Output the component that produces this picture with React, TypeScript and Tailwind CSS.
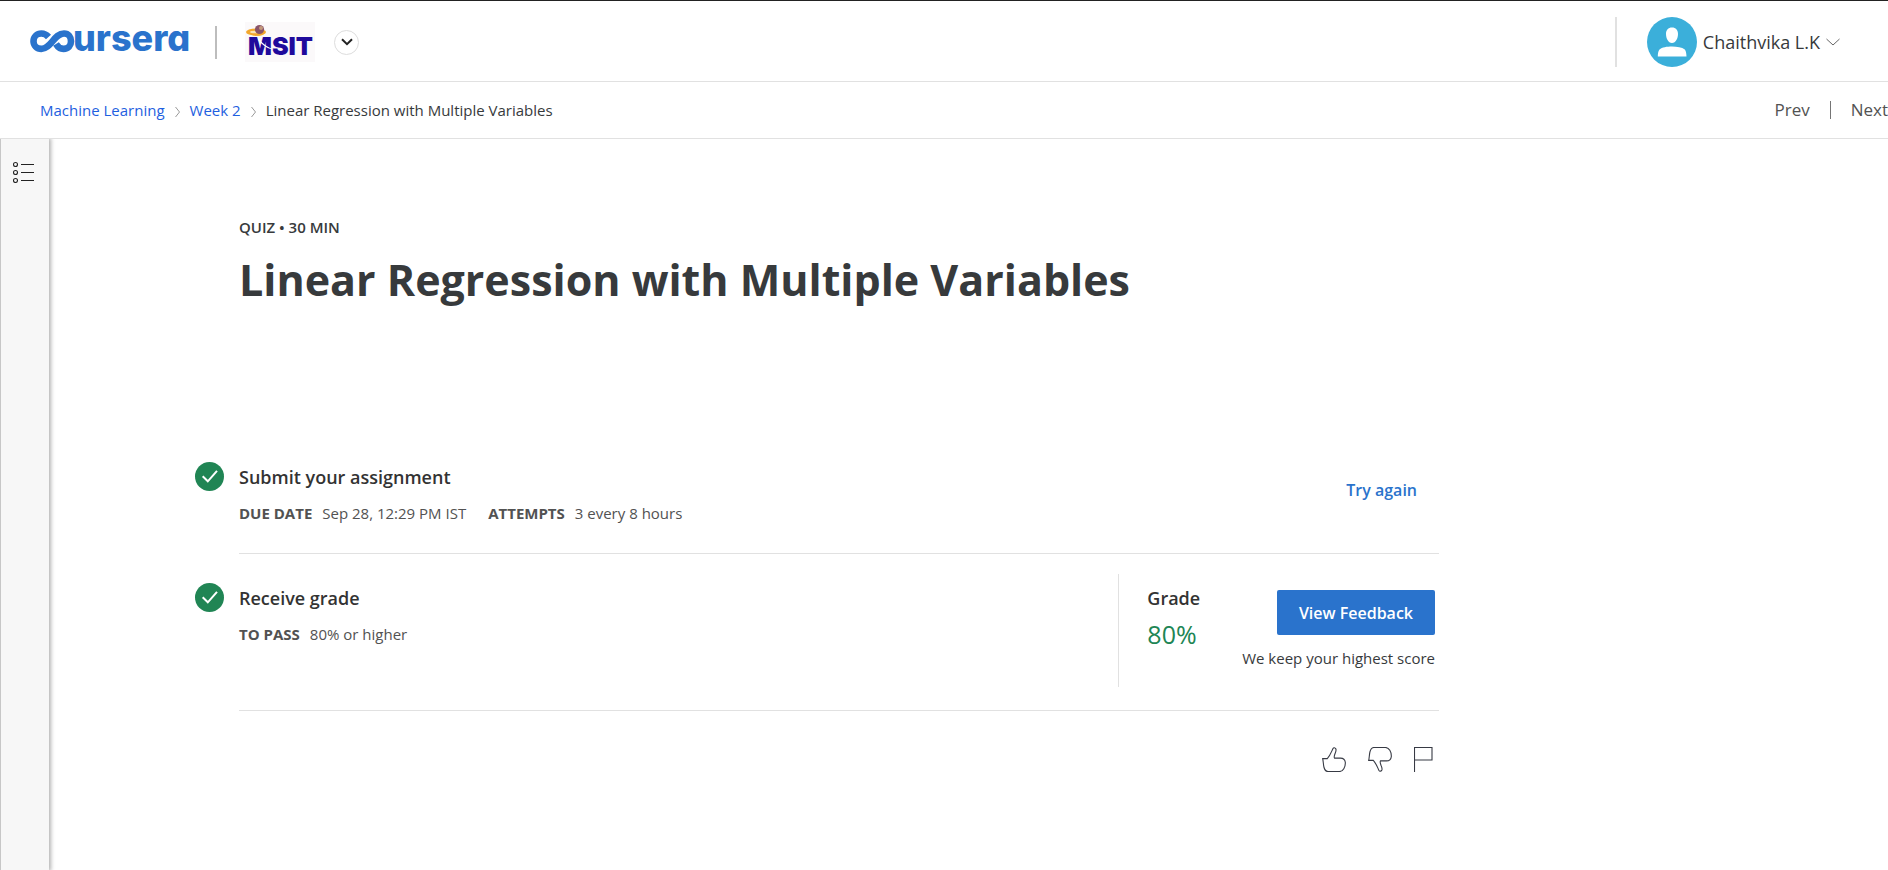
import type { ReactNode } from "react";

function CourseraLogo() {
  return (
    <svg width="166" height="54" viewBox="0 -11 166 54" role="img" aria-label="Coursera">
      <path
        d="M18.500 11C16.800 9 14.500 7.500 11.400 7.500C6.800 7.500 3.500 11 3.500 15.200S6.800 22.900 11.400 22.900C21 22.900 24 7.500 34 7.500C38.600 7.500 41 11 41 15.200S38.500 22.900 33.500 22.900C29.500 22.900 27.500 20.500 26 18"
        fill="none"
        stroke="#2a73cc"
        strokeWidth="6.600"
      />
      <text
        x="43"
        y="25"
        className="fill-[#2a73cc] font-['Inter',sans-serif] text-[36px] font-extrabold [font-feature-settings:'cv11']"
      >
        ursera
      </text>
    </svg>
  );
}

function MsitLogo() {
  return (
    <svg width="70" height="40" viewBox="0 0 70 40" role="img" aria-label="MSIT">
      <rect width="70" height="40" fill="#fbf9fa" />
      <text
        x="3"
        y="33"
        className="fill-[#1f0a9c] font-['Inter',sans-serif] text-[25px] font-black"
      >
        MSIT
      </text>
      <path d="M14 17C18 22 23 25.500 29 27.500C24 27.500 17 23.500 13 17.500Z" fill="#fff" />
      <ellipse cx="11" cy="10" rx="10" ry="3.600" fill="#f3a72c" />
      <ellipse cx="10" cy="10" rx="5" ry="1.300" fill="#fbe3b4" />
      <circle cx="14.500" cy="7.500" r="4.600" fill="#8a5468" />
      <circle cx="16" cy="6" r="2" fill="#c49a7c" />
      <path d="M6 12.500C11 14 17 13 20.500 10.500C18 14.500 10 15 6 12.500Z" fill="#f3a72c" />
    </svg>
  );
}

function CheckBadge() {
  return (
    <svg className="shrink-0" width="29" height="29" viewBox="0 0 29 29" aria-hidden="true">
      <circle cx="14.500" cy="14.500" r="14.500" fill="#208554" />
      <path d="M7.700 14.200L12.800 19.300L22 8.800" fill="none" stroke="#fff" strokeWidth="2" />
    </svg>
  );
}

function Crumb() {
  return (
    <svg className="mt-1" width="5" height="12" viewBox="0 0 5 12" aria-hidden="true">
      <path d="M.5 1L4.500 6L.5 11" fill="none" stroke="#999" />
    </svg>
  );
}

function Meta({ label, value }: { label: string; value: string }) {
  return (
    <div className="flex gap-2.5">
      <dt className="font-bold">{label}</dt>
      <dd>{value}</dd>
    </div>
  );
}

function Step({ title, meta, children }: { title: string; meta: ReactNode; children: ReactNode }) {
  return (
    <section className="flex gap-[15px]">
      <div className="pt-[29px]">
        <CheckBadge />
      </div>
      <div className="flex flex-1 justify-between border-b border-[#e1e1e1]">
        <div className="pt-8">
          <h2 className="text-[18px] leading-6 font-semibold text-[#333]">{title}</h2>
          <dl className="mt-3 flex gap-[22px] text-[15px] leading-6 text-[#525252]">{meta}</dl>
        </div>
        {children}
      </div>
    </section>
  );
}

const iconPath = { fill: "none", stroke: "#373a44", strokeWidth: 1.1 };
const thumb =
  "M.7 11.600H5.300C8.200 8.500 9.500 4.500 11 1.500C11.600.4 13 .6 13.800 1.900C14.500 3.100 13.900 4.500 13.200 6.200C12.600 7.900 11.600 10.200 12.500 11.100H18.500C21 11.100 23 12.700 23.300 15.300C23.600 20 21 24.500 17.500 24.500H6C4 24.500 2.600 22.800 1.900 20C1.300 17.500 1.300 14.300.7 11.600Z";

export default function App() {
  return (
    <div className="flex min-h-screen flex-col overflow-hidden bg-white font-['Open_Sans',sans-serif] text-[#373a3c]">
      <header className="flex h-[82px] items-center justify-between border-t border-b border-t-[#222] border-b-[#e1e1e1] pt-0.5 pr-12 pl-[30px]">
        <div className="flex items-center">
          <a href="#home">
            <CourseraLogo />
          </a>
          <span className="ml-[19px] h-[33px] w-0.5 bg-[#bdbdbd]" />
          <a href="#msit" className="ml-7">
            <MsitLogo />
          </a>
          <button
            type="button"
            aria-label="Switch program"
            className="ml-[19px] flex size-[25px] items-center justify-center rounded-full border border-[#ddd]"
          >
            <svg width="12" height="8" viewBox="0 0 12 8" aria-hidden="true">
              <path d="M1 1.200L6 6.200L11 1.200" fill="none" stroke="#222" strokeWidth="2" />
            </svg>
          </button>
        </div>
        <div className="flex items-center">
          <span className="h-[50px] w-0.5 bg-[#e1e1e1]" />
          <button type="button" className="ml-[30px] flex items-center gap-1.5 text-[18px]">
            <svg width="50" height="50" viewBox="0 0 50 50" aria-hidden="true">
              <circle cx="25" cy="25" r="25" fill="#3bafda" />
              <path
                d="M25 10.500C28.800 10.500 31 13.200 31 16.800C31 21.500 28.800 26 25 26S19 21.500 19 16.800C19 13.200 21.200 10.500 25 10.500ZM10.800 39.500C10.900 36 11.300 33.800 12.500 32.500C15 30.300 20 29.500 25 29.500S35 30.300 37.800 32.500C39 33.800 39.300 36 39.500 39.500Z"
                fill="#fff"
              />
            </svg>
            Chaithvika L.K
            <svg width="14" height="8" viewBox="0 0 14 8" aria-hidden="true">
              <path d="M.5 1L7 7L13.500 1" fill="none" stroke="#666" />
            </svg>
          </button>
        </div>
      </header>

      <div className="flex h-[57px] items-center justify-between border-b border-[#e1e1e1] pl-10">
        <nav aria-label="Breadcrumb" className="flex items-center gap-2.5 text-[15px]">
          <a href="#course" className="text-[#1f5fe0]">
            Machine Learning
          </a>
          <Crumb />
          <a href="#week" className="text-[#1f5fe0]">
            Week 2
          </a>
          <Crumb />
          <span>Linear Regression with Multiple Variables</span>
        </nav>
        <nav aria-label="Items" className="flex items-center gap-5 text-[17px] text-[#525252]">
          <a href="#prev">Prev</a>
          <span className="h-[18px] w-px bg-[#757575]" />
          <a href="#next">Next</a>
        </nav>
      </div>

      <div className="flex flex-1">
        <aside className="w-[49px] border-l border-[#c7c7c7] bg-[#f7f7f7] pt-[22px] pl-3 shadow-[1px_0_4px_1px_rgba(0,0,0,0.3)] [clip-path:inset(0_-8px_0_0)]">
          <button type="button" aria-label="Course outline" className="block">
            <svg width="22" height="22" viewBox="0 0 22 22" aria-hidden="true">
              <g fill="none" stroke="#222" strokeWidth="1.100">
                <circle cx="2.500" cy="3.500" r="2" />
                <circle cx="2.500" cy="11.500" r="2" />
                <circle cx="2.500" cy="19.500" r="2" />
                <path d="M8 3.500H21M8 11.500H21M8 19.500H21" />
              </g>
            </svg>
          </button>
        </aside>
        <main className="flex-1 pt-[78px] pl-[146px]">
          <div className="max-w-[1244px]">
            <div className="pl-11">
              <p className="text-[15px] leading-5 font-semibold">QUIZ • 30 MIN</p>
              <h1 className="mt-[15px] text-[43px] leading-[56px] font-bold">
                Linear Regression with Multiple Variables
              </h1>
            </div>
            <div className="mt-[125px]">
              <Step
                title="Submit your assignment"
                meta={
                  <>
                    <Meta label="DUE DATE" value="Sep 28, 12:29 PM IST" />
                    <Meta label="ATTEMPTS" value="3 every 8 hours" />
                  </>
                }
              >
                <div className="h-[120px] pt-[45px] pr-[22px]">
                  <button type="button" className="text-base font-semibold text-[#2a73cc]">
                    Try again
                  </button>
                </div>
              </Step>
              <Step title="Receive grade" meta={<Meta label="TO PASS" value="80% or higher" />}>
                <div className="flex pt-5 pr-1 pb-[23px]">
                  <div className="h-[113px] border-l border-[#e1e1e1] pt-3 pl-7">
                    <h3 className="text-[18px] leading-6 font-semibold text-[#333]">Grade</h3>
                    <p className="text-[25px] leading-[48px] text-[#208554]">80%</p>
                  </div>
                  <div className="ml-[42px] flex flex-col items-end pt-4">
                    <button
                      type="button"
                      className="h-[45px] rounded-[2px] bg-[#2a73cc] px-[22px] text-base font-semibold text-white"
                    >
                      View Feedback
                    </button>
                    <p className="mt-[11px] text-[15px] leading-6">We keep your highest score</p>
                  </div>
                </div>
              </Step>
            </div>
            <div className="mt-9 flex justify-end gap-[21px] pr-1.5">
              <button type="button" aria-label="Like">
                <svg width="25" height="25" viewBox="0 0 25 25" aria-hidden="true">
                  <path d={thumb} {...iconPath} />
                </svg>
              </button>
              <button type="button" aria-label="Dislike">
                <svg width="25" height="25" viewBox="0 0 25 25" aria-hidden="true">
                  <path d={thumb} transform="matrix(1 0 0 -1 0 25)" {...iconPath} />
                </svg>
              </button>
              <button type="button" aria-label="Report an issue">
                <svg width="19" height="25" viewBox="0 0 19 25" aria-hidden="true">
                  <path d="M.5 25V.5H18V13H.5" {...iconPath} />
                </svg>
              </button>
            </div>
          </div>
        </main>
      </div>
    </div>
  );
}
